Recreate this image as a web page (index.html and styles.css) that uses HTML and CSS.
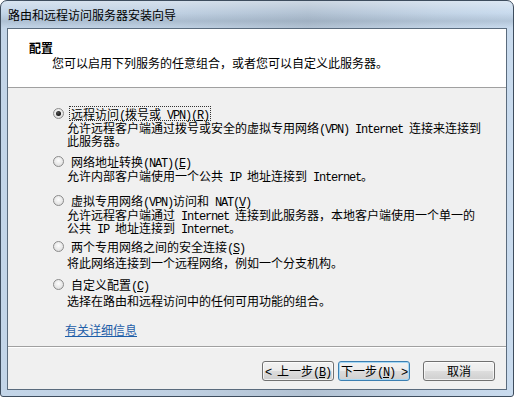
FILE: index.html
```html
<!DOCTYPE html>
<html lang="zh-CN">
<head>
    <meta charset="UTF-8">
    <title>路由和远程访问服务器安装向导</title>
    <link rel="stylesheet" href="styles.css">
</head>
<body>
    <div class="window">
        <div class="titlebar">路由和远程访问服务器安装向导</div>
        <div class="client">
            <div class="wizard-header">
                <h1>配置</h1>
                <p>您可以启用下列服务的任意组合，或者您可以自定义此服务器。</p>
            </div>
            <div class="wizard-body">
                <div class="option opt-1">
                    <div class="choice"><span class="radio checked"></span><span class="label focus">远程访问<span class="en">(</span>拨号或<span class="en"> VPN)(<u>R</u>)</span></span></div>
                    <p class="desc">允许远程客户端通过拨号或安全的虚拟专用网络<span class="en">(VPN) Internet </span>连接来连接到此服务器。</p>
                </div>
                <div class="option opt-2">
                    <div class="choice"><span class="radio"></span><span class="label">网络地址转换<span class="en">(NAT)(<u>E</u>)</span></span></div>
                    <p class="desc">允许内部客户端使用一个公共<span class="en"> IP </span>地址连接到<span class="en"> Internet</span>。</p>
                </div>
                <div class="option opt-3">
                    <div class="choice"><span class="radio"></span><span class="label">虚拟专用网络<span class="en">(VPN)</span>访问和<span class="en"> NAT(<u>V</u>)</span></span></div>
                    <p class="desc">允许远程客户端通过<span class="en"> Internet </span>连接到此服务器，本地客户端使用一个单一的公共<span class="en"> IP </span>地址连接到<span class="en"> Internet</span>。</p>
                </div>
                <div class="option opt-4">
                    <div class="choice"><span class="radio"></span><span class="label">两个专用网络之间的安全连接<span class="en">(<u>S</u>)</span></span></div>
                    <p class="desc">将此网络连接到一个远程网络，例如一个分支机构。</p>
                </div>
                <div class="option opt-5">
                    <div class="choice"><span class="radio"></span><span class="label">自定义配置<span class="en">(<u>C</u>)</span></span></div>
                    <p class="desc">选择在路由和远程访问中的任何可用功能的组合。</p>
                </div>
                <a class="more" href="#">有关详细信息</a>
            </div>
            <div class="wizard-footer">
                <button class="btn"><span class="en">&lt; </span>上一步<span class="en">(<u>B</u>)</span></button>
                <button class="btn default">下一步<span class="en">(<u>N</u>) &gt;</span></button>
                <button class="btn cancel">取消</button>
            </div>
        </div>
    </div>
</body>
</html>
```

FILE: styles.css
```css
body {
    margin: 0;
    font-family: "Noto Sans CJK SC", sans-serif;
    font-size: 12px;
    color: #000;
}

.window {
    width: 514px;
    height: 397px;
    box-sizing: border-box;
    padding: 0 6px 6px 6px;
    border: 1px solid #3e4d5e;
    border-radius: 7px 7px 3px 3px;
    background:
        linear-gradient(180deg, rgba(255, 255, 255, 0.35) 0px, rgba(255, 255, 255, 0) 12px, rgba(80, 100, 120, 0.18) 20px, rgba(255, 255, 255, 0) 27px),
        linear-gradient(90deg, #c3d5e8 0%, #bfd0e2 35%, #b2c2d3 60%, #c3d4e6 85%, #c9dbee 100%);
    display: flex;
    flex-direction: column;
}

.titlebar {
    height: 27px;
    line-height: 28px;
    padding-left: 1px;
    white-space: nowrap;
}

.client {
    flex: 1;
    border: 1px solid #5a6b7d;
    background-color: #f0f0f0;
    display: flex;
    flex-direction: column;
}

.en {
    font-family: "Liberation Mono", monospace;
    font-size: 12px;
    letter-spacing: -1.2px;
    line-height: 0;
}

/* header */

.wizard-header {
    height: 59px;
    box-sizing: border-box;
    padding: 12px 0 0 21px;
    background-color: #fff;
    border-bottom: 1px solid #a0a0a0;
}

.wizard-header h1 {
    margin: 0;
    font-size: 12px;
    font-weight: bold;
    line-height: 13px;
}

.wizard-header p {
    margin: 2px 0 0 23px;
    line-height: 13px;
}

/* options */

.wizard-body {
    flex: 1;
    padding: 18px 0 0 45px;
    border-bottom: 1px solid #a0a0a0;
}

.option {
    margin-bottom: 7px;
}

.opt-2 { margin-bottom: 11px; }
.opt-3 { margin-bottom: 5px; }
.opt-4 { margin-bottom: 8px; }
.opt-5 { margin-bottom: 14px; }

.opt-4 .desc,
.opt-5 .desc {
    margin-top: 2px;
}

.choice {
    display: flex;
    align-items: center;
    height: 15px;
}

.radio {
    width: 11px;
    height: 11px;
    box-sizing: border-box;
    border: 1px solid #8b8b8b;
    border-radius: 50%;
    background: radial-gradient(circle at 50% 40%, #fdfdfd 0%, #e6e6e6 60%, #d0d0d0 100%);
    position: relative;
    margin-right: 5px;
}

.radio.checked::after {
    content: "";
    position: absolute;
    left: 2px;
    top: 2px;
    width: 5px;
    height: 5px;
    border-radius: 50%;
    background: radial-gradient(circle at 40% 35%, #555 0%, #111 70%);
}

.label {
    line-height: 13px;
    padding: 0 1px;
    border: 1px dotted transparent;
    white-space: nowrap;
}

.label.focus {
    border-color: #333;
}

.desc {
    width: 416px;
    margin: 0 0 0 14px;
    line-height: 13px;
}

.more {
    display: inline-block;
    margin-left: 12px;
    line-height: 13px;
    color: #1e5ea8;
}

/* buttons */

.wizard-footer {
    height: 42px;
    box-sizing: border-box;
    padding: 13px 11px 0 0;
    border-top: 1px solid #fff;
    display: flex;
    justify-content: flex-end;
    align-items: flex-start;
    gap: 4px;
}

.btn {
    width: 72px;
    height: 20px;
    padding: 0;
    border: 1px solid #707070;
    border-radius: 3px;
    background: linear-gradient(180deg, #f2f2f2 0%, #ebebeb 50%, #dddddd 51%, #cfcfcf 100%);
    box-shadow: inset 0 0 0 1px rgba(255, 255, 255, 0.7);
    font-family: "Noto Sans CJK SC", sans-serif;
    font-size: 12px;
    line-height: 16px;
    color: #000;
}

.btn.default {
    border-color: #3c7fb1;
    box-shadow: inset 0 0 0 1px #a6d8f5;
}

.btn.cancel {
    margin-left: 9px;
}
```
